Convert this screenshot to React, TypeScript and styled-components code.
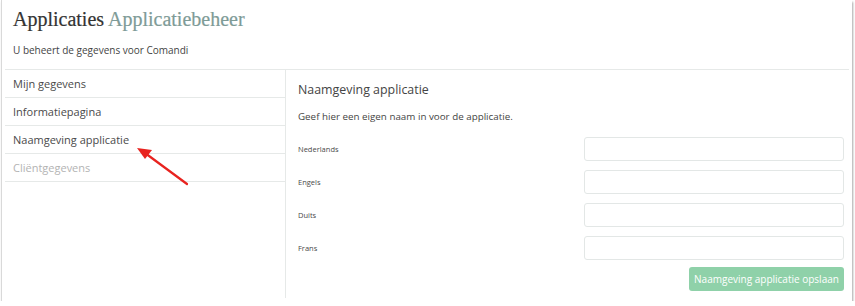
import styled, { createGlobalStyle } from 'styled-components';

const GlobalStyle = createGlobalStyle`
  html, body {
    margin: 0;
    padding: 0;
    background: #ffffff;
  }
  body {
    font-family: "Open Sans", "Noto Sans", sans-serif;
    color: #444;
  }
`;

const Frame = styled.div`
  position: relative;
  box-sizing: border-box;
  width: 851px;
  height: 301px;
  margin-left: 1px;
  background: #fff;
  border-left: 1px solid #d9d9d9;
  box-shadow: 1px 2px 2px rgba(0, 0, 0, 0.35);
  display: flex;
  flex-direction: column;
`;

const Header = styled.header`
  padding: 6px 11px 0;
  height: 69px;
  box-sizing: border-box;
`;

const Title = styled.h1`
  margin: 0;
  font-family: "Liberation Serif", "DejaVu Serif", serif;
  font-weight: normal;
  font-size: 20px;
  line-height: 26px;
  color: #333;
  -webkit-text-stroke: 0.2px #333;

  span {
    color: #7e9b97;
    -webkit-text-stroke: 0.2px #7e9b97;
  }
`;

const Subtitle = styled.p`
  margin: 10px 0 0;
  font-size: 10px;
  line-height: 16px;
  color: #444;
`;

const Body = styled.div`
  flex: 1;
  display: flex;
  margin: 0 3px 3px 3px;
  border-top: 1px solid #e6e9e8;
`;

const Sidebar = styled.nav`
  width: 280px;
  border-right: 1px solid #e6e9e8;
  display: flex;
  flex-direction: column;
`;

const NavItem = styled.div<{ $disabled?: boolean }>`
  height: 27px;
  line-height: 27px;
  padding-left: 8px;
  font-size: 11px;
  color: ${(p) => (p.$disabled ? '#b3b3b3' : '#4a4a4a')};
  border-bottom: 1px solid #e6e9e8;
`;

const Panel = styled.section`
  flex: 1;
  padding: 10px 5px 0 12px;
  display: flex;
  flex-direction: column;
`;

const PanelTitle = styled.h2`
  margin: 0;
  font-weight: normal;
  font-size: 12.4px;
  line-height: 20px;
  color: #444;
`;

const Intro = styled.p`
  margin: 9px 0 0;
  font-size: 9.8px;
  line-height: 16px;
  color: #444;
`;

const Form = styled.div`
  margin-top: 12px;
  display: flex;
  flex-direction: column;
  gap: 9px;
`;

const Row = styled.div`
  display: flex;
  align-items: center;
  justify-content: space-between;
`;

const Label = styled.label`
  font-size: 7.5px;
  color: #4a4a4a;
`;

const Input = styled.input`
  box-sizing: border-box;
  width: 260px;
  height: 24px;
  border: 1px solid #e3e7e6;
  border-radius: 3px;
  background: #fff;
  outline: none;
`;

const Actions = styled.div`
  display: flex;
  justify-content: flex-end;
  margin-top: 7px;
`;

const SaveButton = styled.button`
  box-sizing: border-box;
  height: 24px;
  width: 155px;
  border: none;
  border-radius: 3px;
  background: #8fd1a9;
  color: #fff;
  font-family: "Open Sans", "Noto Sans", sans-serif;
  font-size: 10px;
  padding: 0;
`;

const Arrow = styled.svg`
  position: absolute;
  left: 0;
  top: 0;
  pointer-events: none;
`;

const languages = ['Nederlands', 'Engels', 'Duits', 'Frans'];

export default function App() {
  return (
    <>
      <GlobalStyle />
      <Frame>
        <Header>
          <Title>
            Applicaties <span>Applicatiebeheer</span>
          </Title>
          <Subtitle>U beheert de gegevens voor Comandi</Subtitle>
        </Header>
        <Body>
          <Sidebar>
            <NavItem>Mijn gegevens</NavItem>
            <NavItem>Informatiepagina</NavItem>
            <NavItem>Naamgeving applicatie</NavItem>
            <NavItem $disabled>Cliëntgegevens</NavItem>
          </Sidebar>
          <Panel>
            <PanelTitle>Naamgeving applicatie</PanelTitle>
            <Intro>Geef hier een eigen naam in voor de applicatie.</Intro>
            <Form>
              {languages.map((lang) => (
                <Row key={lang}>
                  <Label>{lang}</Label>
                  <Input />
                </Row>
              ))}
            </Form>
            <Actions>
              <SaveButton>Naamgeving applicatie opslaan</SaveButton>
            </Actions>
          </Panel>
        </Body>
        <Arrow width="200" height="200" viewBox="0 0 200 200">
          <line x1="185" y1="184" x2="143" y2="153" stroke="#e8231f" strokeWidth="2.2" strokeLinecap="round" />
          <polygon points="135,148 150,150 143,159" fill="#e8231f" />
        </Arrow>
      </Frame>
    </>
  );
}
